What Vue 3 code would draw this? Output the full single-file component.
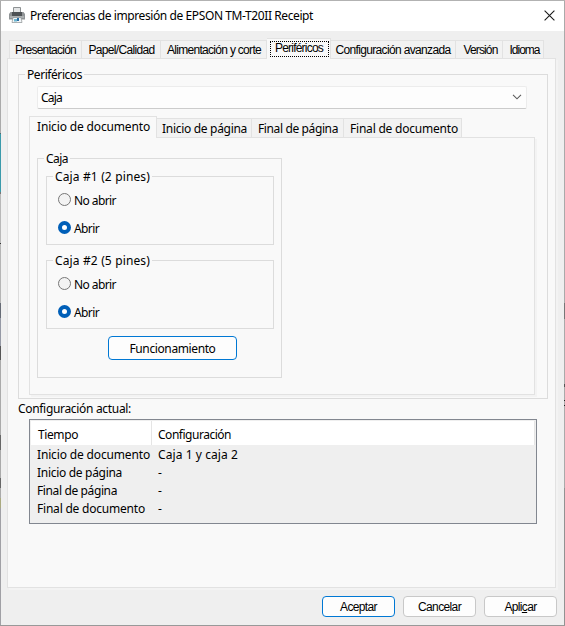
<script setup>
const vFit = {
  mounted(el, { value }) {
    const width = el.getBoundingClientRect().width
    el.style.letterSpacing = (value - width) / el.textContent.length + 'px'
  },
}

const tabs = [
  { label: 'Presentación', w: 73, text: 61 },
  { label: 'Papel/Calidad', w: 79, text: 66 },
  { label: 'Alimentación y corte', w: 106, text: 94 },
  { label: 'Periféricos', w: 64, text: 48, active: true },
  { label: 'Configuración avanzada', w: 125, text: 115 },
  { label: 'Versión', w: 47, text: 34 },
  { label: 'Idioma', w: 41, text: 30 },
]

const subTabs = [
  { label: 'Inicio de documento', w: 128, text: 113, active: true },
  { label: 'Inicio de página', w: 95, text: 85 },
  { label: 'Final de página', w: 92, text: 80 },
  { label: 'Final de documento', w: 118, text: 108 },
]

const drawers = [
  { label: 'Caja #1 (2 pines)', name: 'drawer1' },
  { label: 'Caja #2 (5 pines)', name: 'drawer2' },
]

const rows = [
  { time: 'Inicio de documento', text: 113, value: 'Caja 1 y caja 2', valueText: 80 },
  { time: 'Inicio de página', text: 85, value: '-', valueText: 5 },
  { time: 'Final de página', text: 80, value: '-', valueText: 5 },
  { time: 'Final de documento', text: 108, value: '-', valueText: 5 },
]
</script>

<template>
  <div class="screen">
    <div class="behind-left"></div>
    <main class="dialog">
      <header class="titlebar">
        <svg class="printer" width="16" height="16" viewBox="0 0 16 16">
          <path d="M4.5 0.5h7v5h-7z" fill="#e3e5e6" stroke="#8d9193" />
          <path d="M1.5 5h13L16 7v5.500H0V7z" fill="#909496" />
          <path d="M3 5h10v4H3z" fill="#4e5255" />
          <path d="M1 9.500h14v1H1z" fill="#c9cccd" />
          <path d="M4 10.500h8l1 5H3z" fill="#f2f5f7" stroke="#8b9093" stroke-width=".7" />
          <path d="M5 12h3v2.500H5z" fill="#6db6cf" />
          <path d="M8 11h2v3H8z" fill="#296da4" />
        </svg>
        <span v-fit="283" class="title">Preferencias de impresión de EPSON TM-T20II Receipt</span>
        <svg class="close" width="11" height="11" viewBox="0 0 11 11">
          <path d="M.6.6l9.800 9.800M10.400.6L.6 10.400" stroke="#1a1a1a" stroke-width="1.1" fill="none" />
        </svg>
      </header>

      <nav class="tabs">
        <div
          v-for="t in tabs"
          :key="t.label"
          class="tab"
          :class="{ active: t.active }"
          :style="{ width: t.w + 'px' }"
        >
          <span class="focus"><span v-fit="t.text" class="fit">{{ t.label }}</span></span>
        </div>
      </nav>

      <section class="page">
        <fieldset class="group outer">
          <legend><span v-fit="55" class="fit">Periféricos</span></legend>
          <div class="combo">
            <span v-fit="21" class="fit">Caja</span>
            <svg width="10" height="6" viewBox="0 0 10 6">
              <path d="M1 .8l4 4 4-4" fill="none" stroke="#5c5c5c" stroke-width="1.1" />
            </svg>
          </div>

          <div class="subtabs">
            <div
              v-for="t in subTabs"
              :key="t.label"
              class="subtab"
              :class="{ active: t.active }"
              :style="{ width: t.w + 'px' }"
            >
              <span v-fit="t.text" class="fit">{{ t.label }}</span>
            </div>
          </div>

          <div class="subpage">
            <fieldset class="group drawer-box">
              <legend><span v-fit="22" class="fit">Caja</span></legend>
              <fieldset v-for="d in drawers" :key="d.name" class="group drawer">
                <legend><span v-fit="95" class="fit">{{ d.label }}</span></legend>
                <div class="option">
                  <i class="radio"></i><span v-fit="42" class="fit">No abrir</span>
                </div>
                <div class="option">
                  <i class="radio on"></i><span v-fit="25" class="fit">Abrir</span>
                </div>
              </fieldset>
              <button class="run"><span v-fit="86" class="fit">Funcionamiento</span></button>
            </fieldset>
          </div>
        </fieldset>

        <div class="caption"><span v-fit="113" class="fit">Configuración actual:</span></div>
        <div class="list">
          <div class="head">
            <div class="cell first"><span v-fit="40" class="fit">Tiempo</span></div>
            <div class="cell"><span v-fit="73" class="fit">Configuración</span></div>
          </div>
          <div v-for="r in rows" :key="r.time" class="row">
            <div class="cell first"><span v-fit="r.text" class="fit">{{ r.time }}</span></div>
            <div class="cell"><span v-fit="r.valueText" class="fit">{{ r.value }}</span></div>
          </div>
        </div>
      </section>

      <footer class="actions">
        <button class="default"><span v-fit="37" class="fit">Aceptar</span></button>
        <button><span v-fit="43" class="fit">Cancelar</span></button>
        <button><span v-fit="32" class="fit">Apli<u>c</u>ar</span></button>
      </footer>
    </main>
    <div class="behind-right"></div>
  </div>
</template>

<style>
body {
  margin: 0;
  overflow: hidden;
}
</style>

<style scoped>
* {
  box-sizing: border-box;
}
.screen {
  display: flex;
  width: 565px;
  height: 626px;
  border-top: 1px solid #b2b2b2;
  border-bottom: 1px solid #999;
  background: #efefef;
  font-family: "Noto Sans", "Open Sans", sans-serif;
  font-size: 12px;
  color: #000;
}
.behind-left {
  width: 1px;
  background: linear-gradient(
    #aaa 0 132px, #4e6b70 132px 133px, #3b9aab 133px 191px, #777 191px 193px,
    #b8b8b8 193px 242px, #333 242px 243px, #b5b5b5 243px 302px, #666b75 302px 317px,
    #9599a5 317px 345px, #555 345px 359px, #aaa 359px 434px, #666 434px 449px,
    #aaa 449px 477px, #666 477px 487px, #aaa 487px 497px, #aaaa80 497px 507px, #a0a0a5 507px
  );
}
.behind-right {
  width: 1px;
  background: linear-gradient(
    #aaa 0 302px, #777 302px 318px, #aaa 318px 383px, #555 383px 386px,
    #aaa 386px 399px, #222 399px 400px, #aaa 400px 404px, #222 404px 405px,
    #aaa 405px 487px, #929292 487px
  );
}
.dialog {
  display: flex;
  flex-direction: column;
  width: 563px;
}
.fit {
  display: inline-block;
  white-space: nowrap;
}
.titlebar {
  display: flex;
  align-items: center;
  height: 30px;
  padding: 0 9px 2px 8px;
  background: #fff;
}
.title {
  margin-left: 5px;
  white-space: nowrap;
}
.close {
  margin-left: auto;
}
.tabs {
  display: flex;
  align-items: flex-end;
  height: 27px;
  padding-left: 8px;
  font-family: "Liberation Sans", Arial, sans-serif;
  font-size: 12px;
}
.tab {
  display: flex;
  align-items: center;
  justify-content: center;
  height: 18px;
  padding-left: 1px;
  border: 1px solid #e2e2e2;
  border-width: 1px 1px 0 0;
  background: #f2f2f2;
}
.tab:first-child {
  padding-left: 0;
  border-left-width: 1px;
}
.tab.active {
  z-index: 1;
  height: 21px;
  margin-bottom: -1px;
  background: #f9f9f9;
}
.tab.active + .tab {
  padding-left: 0;
}
.tab:nth-last-child(-n + 2) {
  padding-left: 3px;
}
.focus {
  line-height: 14px;
}
.tab.active .focus {
  width: 59px;
  height: 16px;
  border: 1px dotted #000;
  text-align: center;
  line-height: 13px;
}
.page {
  width: 549px;
  height: 530px;
  margin: 0 0 0 6px;
  padding: 7px 10px;
  border: 1px solid #e2e2e2;
  background: #f9f9f9;
  box-shadow: 2px 2px 0 #f3f3f3;
}
.group {
  min-width: 0;
  margin: 0;
  padding: 0;
  border: 1px solid #dcdcdc;
}
legend {
  height: 16px;
  line-height: 16px;
  padding: 0 2px;
}
.outer {
  width: 530px;
  height: 333px;
  padding-left: 10px;
}
.outer > legend {
  margin-left: -4px;
  line-height: 18px;
}
.combo {
  display: flex;
  align-items: center;
  justify-content: space-between;
  width: 490px;
  height: 23px;
  margin: 4px 0 0 8px;
  padding: 0 4px 1px 3px;
  border: 1px solid #ececec;
  border-bottom-color: #ccc;
  border-radius: 2px;
  background: #fdfdfd;
}
.subtabs {
  display: flex;
  align-items: flex-end;
  height: 28px;
}
.subtab {
  display: flex;
  justify-content: center;
  height: 19px;
  padding-left: 1px;
  border: 1px solid #e2e2e2;
  border-width: 1px 1px 0 0;
  background: #f2f2f2;
  line-height: 20px;
}
.subtab:last-child {
  padding-left: 3px;
}
.subtab.active {
  z-index: 1;
  height: 22px;
  margin-bottom: -1px;
  border-left-width: 1px;
  background: #f9f9f9;
}
.subpage {
  width: 506px;
  height: 258px;
  padding: 12px 7px;
  border: 1px solid #e2e2e2;
  box-shadow: 2px 2px 0 #f3f3f3;
}
.drawer-box {
  width: 245px;
  height: 228px;
  padding-left: 8px;
}
.drawer-box > legend {
  margin-left: -2px;
  line-height: 17px;
}
.drawer {
  width: 228px;
  height: 77px;
  margin-top: 2px;
  padding: 1px 0 0 11px;
}
.drawer + .drawer {
  margin-top: 7px;
}
.drawer > legend {
  margin-left: -5px;
  line-height: 17px;
}
.option {
  display: flex;
  align-items: center;
  gap: 3px;
  height: 28px;
  line-height: 26px;
}
.option .fit {
  padding-top: 3px;
}
.radio {
  width: 13px;
  height: 13px;
  border: 1px solid #777;
  border-radius: 50%;
  background: #f3f3f3;
}
.radio.on {
  border: 4px solid #005fb8;
  background: #fff;
}
button {
  display: flex;
  align-items: center;
  justify-content: center;
  width: 73px;
  height: 21px;
  padding: 0;
  border: 1px solid #c8c8c8;
  border-radius: 4px;
  background: #fdfdfd;
  color: #000;
  font: 12px "Liberation Sans", Arial, sans-serif;
}
button.run {
  width: 129px;
  height: 24px;
  margin: 7px 0 0 62px;
  border-color: #0078d4;
  font: 12px "Noto Sans", "Open Sans", sans-serif;
}
button.default {
  border-color: #0078d4;
}
.caption {
  height: 20px;
  line-height: 20px;
}
.list {
  width: 508px;
  height: 105px;
  margin-left: 11px;
  padding: 1px;
  border: 1px solid #828790;
  background: #efefef;
}
.head,
.row {
  display: flex;
  height: 18px;
  line-height: 20px;
}
.head {
  width: 504px;
  height: 24px;
  border-right: 1px solid #e5e5e5;
  background: #fff;
  line-height: 27px;
}
.cell {
  padding-left: 6px;
}
.first {
  width: 121px;
}
.head .first {
  padding-left: 7px;
  border-right: 1px solid #e5e5e5;
}
.row .first {
  padding-left: 6px;
}
.actions {
  display: flex;
  gap: 8px;
  margin: 8px 0 0 321px;
}
</style>
